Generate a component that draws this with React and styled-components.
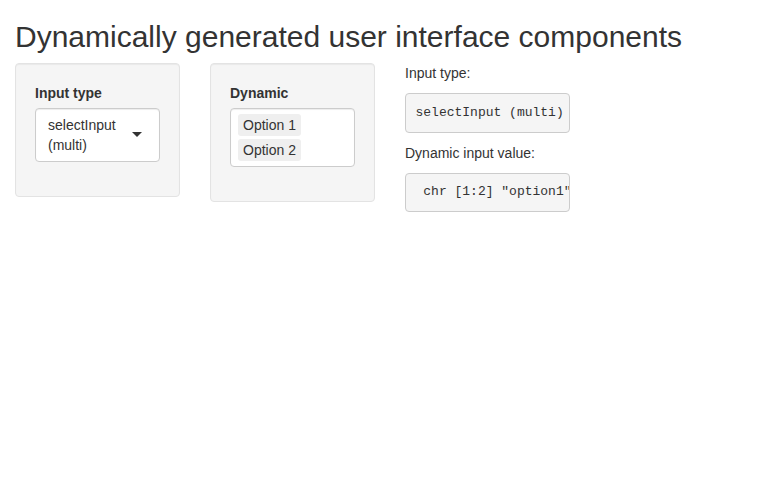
import React from 'react';
import styled, { createGlobalStyle } from 'styled-components';

const GlobalStyle = createGlobalStyle`
  html, body {
    margin: 0;
    background: #fff;
  }
  body {
    font-family: "Liberation Sans", Arial, Helvetica, sans-serif;
    font-size: 14px;
    line-height: 1.42857143;
    color: #333;
  }
  * {
    box-sizing: border-box;
  }
`;

function App() {
  return (
    <Page>
      <GlobalStyle />
      <Title>Dynamically generated user interface components</Title>
      <Row>
        <Column>
          <Well>
            <FormGroup>
              <Label>Input type</Label>
              <SelectBox single>
                <SingleValue>selectInput (multi)</SingleValue>
                <Caret />
              </SelectBox>
            </FormGroup>
          </Well>
        </Column>
        <Column>
          <Well>
            <FormGroup>
              <Label>Dynamic</Label>
              <SelectBox>
                <Item>Option 1</Item>
                <Item>Option 2</Item>
              </SelectBox>
            </FormGroup>
          </Well>
        </Column>
        <Column>
          <Para>Input type:</Para>
          <Verbatim>selectInput (multi)</Verbatim>
          <Para>Dynamic input value:</Para>
          <Verbatim> chr [1:2] "option1" "option2"</Verbatim>
        </Column>
      </Row>
    </Page>
  );
}

export default App;

const Page = styled.div`
  padding: 0 15px;
`;

const Title = styled.h2`
  font-size: 30px;
  font-weight: 500;
  line-height: 1.1;
  margin: 20px 0 10px;
  color: #333;
`;

const Row = styled.div`
  display: grid;
  grid-template-columns: repeat(4, 1fr);
  margin: 0 -15px;
`;

const Column = styled.div`
  padding: 0 15px;
  min-width: 0;
`;

const Well = styled.div`
  min-height: 20px;
  padding: 19px;
  margin-bottom: 20px;
  background: #f5f5f5;
  border: 1px solid #e3e3e3;
  border-radius: 4px;
  box-shadow: inset 0 1px 1px rgba(0, 0, 0, 0.05);
`;

const FormGroup = styled.div`
  margin-bottom: 15px;
`;

const Label = styled.label`
  display: block;
  font-weight: bold;
  margin-bottom: 5px;
`;

const SelectBox = styled.div`
  position: relative;
  display: flex;
  flex-wrap: wrap;
  align-items: flex-start;
  background: #fff;
  border: 1px solid #ccc;
  border-radius: 4px;
  box-shadow: inset 0 1px 1px rgba(0, 0, 0, 0.075);
  padding: ${({ single }) => (single ? '6px 30px 6px 12px' : '5px 12px 2px 7px')};
`;

const SingleValue = styled.span`
  color: #333;
`;

const Caret = styled.span`
  position: absolute;
  top: 50%;
  right: 17px;
  margin-top: -3px;
  width: 0;
  height: 0;
  border-style: solid;
  border-width: 5px 5px 0 5px;
  border-color: #333 transparent transparent transparent;
`;

const Item = styled.div`
  background: #efefef;
  color: #333;
  border-radius: 3px;
  padding: 1px 5px;
  margin: 0 3px 3px 0;
`;

const Para = styled.p`
  margin: 0 0 10px;
`;

const Verbatim = styled.pre`
  margin: 0 0 10px;
  padding: 9.5px;
  font-family: "Liberation Mono", "Courier New", monospace;
  font-size: 13px;
  line-height: 1.42857143;
  color: #333;
  background: #f5f5f5;
  border: 1px solid #ccc;
  border-radius: 4px;
  white-space: pre;
  overflow: hidden;
`;
